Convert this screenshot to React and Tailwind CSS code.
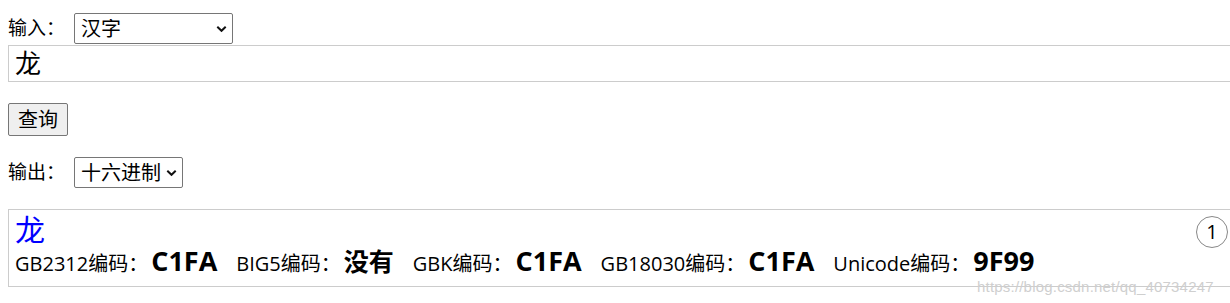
import React, { useState } from "react";

const font = { fontFamily: '"Open Sans", "Noto Sans CJK SC", sans-serif' };

const Chevron = () => (
  <svg
    className="pointer-events-none absolute right-[6px] top-1/2 -translate-y-1/2"
    width="11"
    height="7"
    viewBox="0 0 11 7"
  >
    <path d="M1.3 1.3 L5.5 5.3 L9.7 1.3" fill="none" stroke="#111" strokeWidth="2" />
  </svg>
);

const Select = ({ value, options, width }) => (
  <div className={`relative ${width}`}>
    <select
      defaultValue={value}
      className="h-[31px] w-full appearance-none rounded-[2px] border border-[#767676] bg-white pl-[6px] text-[20px] leading-none text-black outline-none"
    >
      {options.map((o) => (
        <option key={o}>{o}</option>
      ))}
    </select>
    <Chevron />
  </div>
);

const codes = [
  ["GB2312编码：", "C1FA"],
  ["BIG5编码：", "没有"],
  ["GBK编码：", "C1FA"],
  ["GB18030编码：", "C1FA"],
  ["Unicode编码：", "9F99"],
];

export default function App() {
  const [text, setText] = useState("龙");

  return (
    <div className="relative w-full overflow-hidden bg-white text-black" style={font}>
      <div className="w-[1260px] pb-4 pl-2 pt-[13px]">
        {/* input row */}
        <div className="flex items-center">
          <span className="w-[66px] text-[19px]">输入：</span>
          <Select value="汉字" options={["汉字", "十六进制"]} width="w-[159px]" />
        </div>
        <input
          value={text}
          onChange={(e) => setText(e.target.value)}
          className="mt-px block h-[37px] w-[1240px] border border-[#cccccc] px-[6px] text-[26px] outline-none"
        />

        <button className="mt-[21px] block h-[33px] w-[60px] rounded-[2px] border border-[#767676] bg-[#efefef] text-[20px] leading-none">
          查询
        </button>

        {/* output row */}
        <div className="mt-[21px] flex items-center">
          <span className="w-[66px] text-[19px]">输出：</span>
          <Select value="十六进制" options={["十六进制", "十进制"]} width="w-[109px]" />
        </div>

        {/* result */}
        <div className="relative mt-[21px] h-[78px] w-[1240px] border border-[#cccccc] px-[6px] pt-[2px]">
          <div className="text-[30px] leading-[36px] text-[#0000ff]">龙</div>
          <div className="-mt-[4px] flex items-baseline leading-[34px]">
            {codes.map(([k, v]) => (
              <span key={k} className="mr-[19px] flex items-baseline">
                <span className="text-[20px]">{k}</span>
                <span
                  className={
                    v === "没有"
                      ? "ml-[3px] text-[25px] font-bold"
                      : "ml-[3px] text-[27px] font-bold"
                  }
                >
                  {v}
                </span>
              </span>
            ))}
          </div>
          <span className="absolute left-[1187px] top-[6px] flex h-[32px] w-[32px] items-center justify-center rounded-full border border-[#888] text-[20px]">
            1
          </span>
        </div>
      </div>

      {/* watermark */}
      <span
        className="pointer-events-none absolute left-[977px] top-[276px] text-[15px] tracking-[0.2px] text-[#cfcfcf]"
        style={{ fontFamily: '"Liberation Sans", sans-serif' }}
      >
        https://blog.csdn.net/qq_40734247
      </span>
    </div>
  );
}
